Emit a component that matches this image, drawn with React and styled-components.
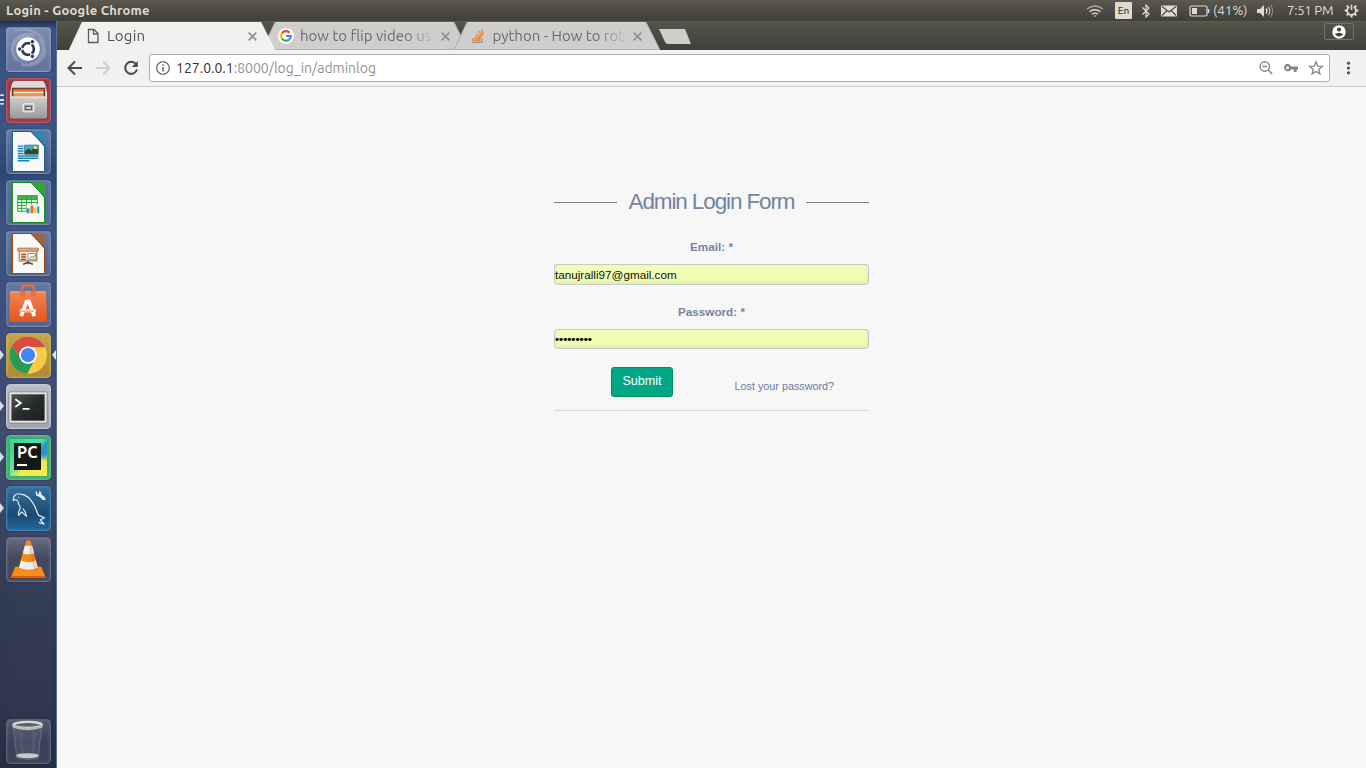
import React from "react";
import styled, { createGlobalStyle } from "styled-components";

const GlobalStyle = createGlobalStyle`
  * { box-sizing: border-box; }
  body { margin: 0; overflow: hidden; }
  svg { display: block; flex: none; }
`;

const uiFont = `Ubuntu, "Noto Sans", "Open Sans", sans-serif`;
const pageFont = `"Liberation Sans", Arial, sans-serif`;

const Desktop = styled.div`
  width: 1366px;
  height: 768px;
  display: flex;
  flex-direction: column;
  font-family: ${uiFont};
  background: #f7f7f7;
`;

const Panel = styled.header`
  height: 21px;
  flex: none;
  display: flex;
  align-items: center;
  justify-content: space-between;
  padding: 0 7px 0 6px;
  background: linear-gradient(#5c5a4f 0, #56544a 3px, #403f3a 20px, #45443c 21px);
  color: #dfdbd2;
`;

const PanelTitle = styled.div`
  font-size: 13px;
  font-weight: 700;
  line-height: 19px;
  padding-bottom: 1px;
  letter-spacing: 0.24px;
  white-space: nowrap;
`;

const Indicators = styled.div`
  display: flex;
  align-items: center;
  height: 21px;
`;

const Indicator = styled.div`
  display: flex;
  align-items: center;
  margin-left: ${(p) => p.$gap || 0}px;
`;

const PanelText = styled.span`
  width: ${(p) => p.$w}px;
  font-size: 13.3px;
  line-height: 20px;
  letter-spacing: ${(p) => p.$ls || 0}px;
  white-space: nowrap;
`;

const LangBadge = styled.div`
  width: 17px;
  height: 17px;
  border-radius: 1px;
  background: #dfdbd2;
  color: #3c3b37;
  font-size: 10px;
  font-weight: 500;
  line-height: 18px;
  text-align: center;
`;

const Main = styled.div`
  display: flex;
  flex: 1;
  min-height: 0;
`;

const Launcher = styled.nav`
  width: 57px;
  flex: none;
  display: flex;
  flex-direction: column;
  padding: 6px 0 4px;
  border-right: 1px solid #56709c;
  background:
    linear-gradient(90deg, rgba(20, 30, 60, 0.08), transparent 30%, transparent 90%, rgba(20, 35, 70, 0.15)),
    linear-gradient(#1e3257 0, #3b5788 9px, #3d5888 110px, #304978 150px, #3f5786 200px, #425179 360px, #414b6a 480px, #333c55 580px, #2f384f 680px, #272e42 747px);
`;

const LauncherItem = styled.div`
  position: relative;
  height: ${(p) => (p.$last ? 45 : 51)}px;
  padding-left: 6px;
  margin-top: ${(p) => (p.$last ? "auto" : 0)};
`;

const Tile = styled.div`
  width: 45px;
  height: 45px;
  border-radius: 4px;
  border: 1px solid ${(p) => p.$edge || "rgba(190,205,235,.25)"};
  background: ${(p) => p.$bg || "linear-gradient(rgba(200,215,240,.28), rgba(160,180,215,.16))"};
  box-shadow: inset 0 0 3px rgba(255, 255, 255, 0.18), 0 0 2px rgba(10, 15, 40, 0.45);
`;

const RunningMark = styled.i`
  position: absolute;
  top: 17px;
  left: 0;
  border: 5px solid transparent;
  border-left: 4px solid #d8dde6;
  border-right: 0;
`;

const FocusMark = styled(RunningMark)`
  left: auto;
  right: 0;
  border-left: 0;
  border-right: 4px solid #e6e6e6;
`;

const WindowPips = styled.i`
  position: absolute;
  left: 0;
  top: 16px;
  width: 4px;
  height: 11px;
  border-radius: 2px;
  background: repeating-linear-gradient(#dfe4ec 0 2px, transparent 2px 4.5px);
`;

const Browser = styled.section`
  flex: 1;
  display: flex;
  flex-direction: column;
  min-width: 0;
`;

const TabStrip = styled.div`
  height: 29px;
  flex: none;
  display: flex;
  align-items: flex-start;
  padding: 1px 12px 0;
  background: linear-gradient(#5e5c51 0, #55544a 2px, #3f3e39 29px);
`;

const TabBox = styled.div`
  position: relative;
  z-index: ${(p) => (p.$active ? 2 : 1)};
  width: 206px;
  height: 28px;
  flex: none;
  display: flex;
  align-items: center;
  margin-right: -13.5px;
  padding: 0 17px 0 ${(p) => (p.$active ? 17 : 16.5)}px;
  color: ${(p) => (p.$active ? "#4f4f53" : "#6b6b6e")};
`;

const TabShape = styled.svg`
  position: absolute;
  inset: 0;
  z-index: -1;
`;

const TabLabel = styled.span`
  width: 135px;
  margin-left: 6px;
  white-space: nowrap;
  font-size: 15px;
  line-height: 26px;
  letter-spacing: ${(p) => p.$ls || 0}px;
  mask-image: linear-gradient(90deg, #000 ${(p) => (p.$fade ? "104px" : "135px")}, transparent 135px);
`;

const NewTab = styled.svg`
  margin: 6px 0 0 10px;
`;

const ProfileButton = styled.div`
  width: 30px;
  height: 17px;
  margin: 1px 0 0 auto;
  display: flex;
  align-items: center;
  justify-content: center;
  border: 1px solid #74736b;
  border-radius: 2px;
`;

const Toolbar = styled.div`
  height: 37px;
  flex: none;
  display: flex;
  align-items: center;
  padding: 0 8px 0 9px;
  background: #f2f1f0;
  border-bottom: 1px solid #cbcac9;
`;

const NavButtons = styled.div`
  display: flex;
  gap: 10px;
`;

const AddressBar = styled.div`
  width: 1181px;
  height: 28px;
  display: flex;
  align-items: center;
  margin-left: 9px;
  padding: 0 5px;
  border: 1px solid #afadab;
  border-radius: 3px;
  background: #fff;
`;

const Url = styled.div`
  flex: 1;
  margin-left: 5px;
  color: #929295;
  font-size: 14px;
  line-height: 24px;
  white-space: nowrap;
`;

const Host = styled.span`
  color: #303036;
`;

const AddressIcons = styled.div`
  display: flex;
  gap: 9px;
`;

const MenuButton = styled.div`
  margin-left: 10px;
`;

const Page = styled.main`
  flex: 1;
  background: #f7f7f7;
  font-family: ${pageFont};
  color: #73849f;
`;

const LoginForm = styled.form`
  width: 315px;
  margin: 106px auto 0;
  display: flex;
  flex-direction: column;
  align-items: center;
`;

const FormTitle = styled.h1`
  align-self: stretch;
  display: flex;
  justify-content: space-between;
  align-items: center;
  margin: 0;
  height: 18px;
  font-size: 22.5px;
  font-weight: 400;
  line-height: 18px;
  letter-spacing: -1.125px;
  white-space: nowrap;
  &::before,
  &::after {
    content: "";
    width: 63px;
    height: 1px;
    background: #7e7e7e;
  }
`;

const Label = styled.div`
  margin-top: ${(p) => p.$top}px;
  height: 16px;
  font-size: 11.7px;
  font-weight: 700;
  line-height: 16px;
`;

const Field = styled.div`
  align-self: stretch;
  height: ${(p) => p.$h}px;
  margin-top: 9px;
  border: 1px solid #c8c8c8;
  border-radius: 3px;
  background: #f2feb6;
  box-shadow: 0 1px 0 #fff, inset 0 -2px 4px rgba(0, 0, 0, 0.08);
  color: #111;
  font-size: 11.7px;
  line-height: ${(p) => p.$line}px;
`;

const Bullets = styled.span`
  color: #000;
  -webkit-text-stroke: 0.2px #000;
`;

const Actions = styled.div`
  align-self: stretch;
  height: 44px;
  margin-top: 18px;
  padding-left: 57px;
  display: flex;
  border-bottom: 1px solid #d8d8d8;
`;

const SubmitButton = styled.button`
  width: 62px;
  height: 30px;
  padding: 0 0 3px;
  border: 1px solid #008d4c;
  border-radius: 3px;
  background: #00a887;
  color: #fff;
  font-family: inherit;
  font-size: 12.6px;
`;

const LostLink = styled.a`
  margin: 12px 0 0 61.5px;
  font-size: 10.8px;
  line-height: 14px;
  color: #6c7c9e;
  white-space: nowrap;
`;

const Dash = () => (
  <svg width="43" height="43" viewBox="0 0 44 44" fill="none">
    <circle cx="21" cy="21.500" r="16.5" fill="#b8c2da" fillOpacity=".16" />
    <path d="M6 27C2 14 13 3 28 7M38 18c5 13-9 24-24 19M10 33C-1 20 10 7 24 8M33 10c9 10 3 25-10 27M8 3c11-4 25 0 31 13" stroke="#d4dbe9" strokeOpacity=".25" strokeWidth="2.400" />
    <circle cx="21.500" cy="21.500" r="12" fill="#fff" />
    <circle cx="21.500" cy="21.500" r="6" stroke="#303c5e" strokeWidth="2.8" />
    <path d="M21.500 21.500H11M21.500 21.500l6-10M21.500 21.500l6 10" stroke="#fff" strokeWidth="1.4" />
    <g fill="#303c5e" stroke="#fff" strokeWidth=".8"><circle cx="12.900" cy="21.500" r="2.200" /><circle cx="26" cy="14" r="2.200" /><circle cx="26" cy="29" r="2.200" /></g>
  </svg>
);

const Files = () => (
  <svg width="43" height="43" viewBox="0 0 44 44">
    <defs><linearGradient id="steel" x2="0" y2="1"><stop stopColor="#cfcfcf" /><stop offset="1" stopColor="#999" /></linearGradient></defs>
    <path d="M8 2h28q2 0 3 3l2 9v5H3v-5l2-9q1-3 3-3z" fill="#dddcdb" />
    <path d="M5 9h34v9.500H5z" fill="#552c28" />
    <path d="M6 10h32v8.500H6z" fill="#dd642d" /><path d="M7 12.500h30v6H7z" fill="#f09152" /><path d="M7 13.800h30" stroke="#fff0df" strokeWidth="1.300" />
    <path d="M3 18h38v20q0 2.500-2.500 2.500h-33Q3 40.500 3 38z" fill="url(#steel)" /><path d="M3 18.500h38" stroke="#eee" />
    <rect x="16.500" y="25.500" width="11" height="8" rx="1.500" fill="#aaa" stroke="#f5f5f5" strokeWidth="1.200" />
    <rect x="19" y="28" width="6" height="3" fill="#ddd" stroke="#555" />
  </svg>
);

const Doc = ({ color, light, children }) => (
  <svg width="43" height="43" viewBox="0 0 44 44">
    <path d="M5.5 1.5H25l13.5 15v26h-33z" fill="#f9f9f8" stroke={color} strokeWidth="1.2" />
    <path d="M24 1.5h14.5V15z" fill={light} /><path d="M24.5 1.5l14 14.5" stroke={color} strokeWidth="1" />
    {children}
  </svg>
);

const Writer = () => (
  <Doc color="#176486" light="#3385ac">
    <path d="M11 16.500h6M11 19h6M11 21.500h6M11 24h6M11 26.500h21M11 29h21M11 31.500h12" stroke="#1683ba" strokeWidth="1.5" />
    <path d="M18 15.5h14v9H18z" fill="#4aa6d5" /><path d="M18 22l4-3 3 2 3-3 4 2v5H18z" fill="#24502f" /><circle cx="29" cy="18" r="1.7" fill="#ffe45a" />
    <path d="M18 15.5h14v9H18z" fill="none" stroke="#136180" strokeWidth=".7" />
  </Doc>
);
const Calc = () => (
  <Doc color="#159020" light="#34a832">
    <path d="M11 15h20v16H11z" fill="#effcec" /><path d="M11 15h20v4H11z" fill="#43b843" />
    <path d="M11 15h20v16H11zM11 19h20M11 22h20M11 25h20M11 28h20M15 15v16M20 15v16M25 15v16" fill="none" stroke="#2aa33b" />
    <path d="M20 24h13v9H20z" fill="#fff" /><path d="M20 28h3v5h-3z" fill="#3192d0" /><path d="M24 25h3v8h-3z" fill="#e86f21" /><path d="M28 27h2v6h-2z" fill="#efb42d" /><path d="M31 26h2v7h-2z" fill="#1c86b9" />
  </Doc>
);
const Impress = () => (
  <Doc color="#984417" light="#a2623e">
    <path d="M12.500 19h18v10.500h-18z" fill="#fae7dc" stroke="#c97551" strokeWidth="1.2" /><path d="M11 16.500h21v3H11z" fill="#eda985" stroke="#b55f3a" strokeWidth=".8" />
    <path d="M14.500 23h5M14.500 25.500h5M14.500 28h5" stroke="#a24d29" strokeWidth="1.500" /><path d="M21.500 22h8v6h-8z" fill="#fff" stroke="#629166" strokeWidth=".8" />
    <path d="M23 27l2-2 2 1 2.500-3" stroke="#289a43" fill="none" /><path d="M21.500 30v3M21.500 31l-5 2M21.500 31l5 2" stroke="#444" strokeWidth="1.400" />
  </Doc>
);
const Software = () => (
  <svg width="43" height="43" viewBox="0 0 44 44">
    <defs><linearGradient id="bag" x2="0" y2="1"><stop stopColor="#f38651" /><stop offset="1" stopColor="#e4531f" /></linearGradient></defs>
    <path d="M3 9h37l1 31H2z" fill="url(#bag)" /><path d="M3 9h37" stroke="#f7ae82" />
    <path d="M15.500 12V6q0-3.500 3.500-3.500h5q3.500 0 3.500 3.500v6" fill="none" stroke="#d96f4c" strokeWidth="2.6" />
    <path d="M13.500 8.500h5V14h-5zM24.500 8.500h5V14h-5z" fill="#db704c" />
    <path d="M14.500 34l5.500-15h2.500L28 34" fill="none" stroke="#fff" strokeWidth="3.800" />
    <path d="M13 28.500h16.500" stroke="#fff" strokeWidth="3" /><path d="M13 28.700h14.500" stroke="#ef7646" strokeWidth="1" />
  </svg>
);
const Chrome = () => (
  <svg width="43" height="43" viewBox="0 0 44 44">
    <circle cx="21.5" cy="21.500" r="19" fill="#f7c843" />
    <g transform="translate(0 -.5)">
      <path d="M5.1 12.5A19 19 0 0 1 38 12.6L39 14H21.5a8 8 0 0 0-7 12z" fill="#d94c40" />
      <path d="M5.1 12.5A19 19 0 0 0 21 41l8-15a8 8 0 0 1-14.5 0z" fill="#2a9b56" />
      <path d="M21.5 14H39A19 19 0 0 1 21 41l7.7-15a8 8 0 0 0-7.2-12z" fill="#f7ca48" />
      <circle cx="21.5" cy="22" r="9" fill="#fff" /><circle cx="21.5" cy="22" r="7.3" fill="#4285f4" />
    </g>
  </svg>
);
const Terminal = () => (
  <svg width="43" height="43" viewBox="0 0 44 44">
    <defs><linearGradient id="screen" x2="1" y2="1"><stop stopColor="#505253" /><stop offset=".5" stopColor="#292c2d" /><stop offset="1" stopColor="#1b1d1e" /></linearGradient></defs>
    <rect x="2" y="7" width="39" height="32" rx="1" fill="#e5e6e5" stroke="#888" /><rect x="4.500" y="9.500" width="34" height="27" fill="url(#screen)" />
    <path d="M8.500 14.500l5.500 4-5.500 4M16 24.500h7" fill="none" stroke="#fff" strokeWidth="1.9" />
  </svg>
);
const PcMark = styled.div`
  width: 27px;
  height: 27px;
  padding: 0 3px;
  background: #161817;
  color: #fff;
  font: 700 16px/19px Ubuntu, "Open Sans", sans-serif;
  &::after { content: ""; display: block; width: 10px; height: 2px; margin-top: 2px; background: #fff; }
`;
const PcArt = styled.div`
  width: 37px;
  height: 37px;
  margin: 3px;
  padding: 4px;
  background: conic-gradient(from 25deg, #49ddb0 0 4%, #2793cf 8% 15%, #e6ea56 22%, #f3ee4b 28% 50%, #70dca2 58%, #39d690 78%, #3eeab0);
`;
const PyCharm = () => <PcArt><PcMark>PC</PcMark></PcArt>;
const Workbench = () => (
  <svg width="43" height="43" viewBox="0 0 44 44" fill="none" stroke="#e3eff5" strokeLinecap="round" strokeLinejoin="round">
    <path d="M6.500 14C6 9 9 6.500 13 7c7 .500 12 6 15 12 2 3 2 7 4.500 10l6 2.500-4.500 2 4 4.500-5-1.500M6.500 14c2-2 4-1 5 1.500 0 3 2.500 4 2 6.500-1 2-2.500 4-1.500 7l3-3.500 5 4.500c-.5-3-1.500-5-3.500-7.500" strokeWidth="1.200" />
    <path d="M12 10.500h.1" strokeWidth="1.300" />
    <path d="M33 8l4.200 3.200" strokeWidth="3.200" /><path d="M30 5.500l.8 3 2.500.5M33.500 5l1 2M36.500 12.500l2.500 0" strokeWidth="1.600" />
  </svg>
);
const Vlc = () => (
  <svg width="43" height="43" viewBox="0 0 44 44">
    <path d="M8.500 29.500h26.500l4.500 11H4z" fill="#f98f1a" /><path d="M4.300 39h35l.5 1.500H4z" fill="#e45d00" />
    <path d="M19.700 3q2-1.500 4.500 0L32 32q-10.500 5-20.500 0z" fill="#f58b20" />
    <path d="M18.200 8h7.500l2.100 7.500q-6 2.500-11.700 0zM14.300 23q8 3.500 15.200 0l2 7.500q-9.700 4-19.200 0z" fill="#f0eee9" /><path d="M23.500 3l8 29-3.500 1.500L23 16z" fill="#a84b18" fillOpacity=".17" />
  </svg>
);
const Trash = () => (
  <svg width="43" height="43" viewBox="0 0 44 44">
    <path d="M6.500 6h29l-3.500 33q-11 3-22 0z" fill="#a8b0c1" fillOpacity=".12" stroke="#97a0b3" strokeOpacity=".4" />
    <path d="M14 12l2 23M28 12l-2 23" stroke="#cbd0db" strokeOpacity=".08" strokeWidth="3" />
    <ellipse cx="21" cy="36.500" rx="11.500" ry="2.600" fill="#c8cbc8" />
    <ellipse cx="21" cy="5" rx="14.500" ry="3" fill="#5c616c" stroke="#d8d9d3" strokeWidth="2.300" /><path d="M6 5v3q15 5 30 0V5q-15 6-30 0z" fill="#b9bbb6" />
  </svg>
);

const apps = [
  { name: "dash", Icon: Dash, bg: "linear-gradient(#7f8cb0,#63729e)" },
  { name: "files", Icon: Files, bg: "#9b3946", edge: "#b85a68", pips: true },
  { name: "writer", Icon: Writer },
  { name: "calc", Icon: Calc },
  { name: "impress", Icon: Impress },
  { name: "software", Icon: Software },
  { name: "chrome", Icon: Chrome, bg: "linear-gradient(#c2a64c,#ad8a32)", edge: "#c4aa55", running: true, focused: true },
  { name: "terminal", Icon: Terminal, bg: "linear-gradient(#b9bdc5,#a1a4ac)", edge: "#c5c8cf", running: true },
  { name: "pycharm", Icon: PyCharm, bg: "linear-gradient(#45a574,#3bb272)", edge: "#5bbf86", running: true },
  { name: "workbench", Icon: Workbench, bg: "linear-gradient(#356f9c,#1a4a73 65%,#22659c)", edge: "#4080b8", running: true },
  { name: "vlc", Icon: Vlc, bg: "linear-gradient(#656980,#45485c 50%,#464859)", edge: "#6b6f82" },
];

const Close = () => <svg width="9" height="9" viewBox="0 0 9 9" stroke="#929292" strokeWidth="1.7"><path d="M.7.7l7.600 7.600M8.300.7L.7 8.300" /></svg>;
const PageIcon = () => <svg width="15" height="16" viewBox="0 0 15 16" fill="none" stroke="#5d5d5d" strokeWidth="1.3"><path d="M2.500 1.500h5.500l4 4v9H2.500zM7.500 1.500v4.500H12" /></svg>;
const GoogleIcon = () => (
  <svg width="16" height="16" viewBox="0 0 16 16" fill="none" strokeWidth="2.200"><circle cx="8" cy="8" r="8" fill="#fff" />
    <path d="M3.900 5.500A4.800 4.800 0 0 1 11.600 4.800" stroke="#ea4335" /><path d="M3.900 5.500a4.800 4.800 0 0 0 0 5" stroke="#fbbc05" />
    <path d="M3.900 10.500a4.800 4.800 0 0 0 7.300 1" stroke="#34a853" /><path d="M8 8h4.800a4.800 4.800 0 0 1-1.600 3.500" stroke="#4285f4" />
  </svg>
);
const StackIcon = () => (
  <svg width="16" height="16" viewBox="0 0 16 16" fill="none"><path d="M2 10v4.500h9V10" stroke="#91949b" strokeWidth="1.200" />
    <path d="M3.500 12.500h6M3.500 10.500l6 .7M4 8.400l5.700 1.700M5.400 5.800l5 3.300M7.600 3l3.700 4.900M10.800 1l1.300 6" stroke="#f48024" strokeWidth="1.300" />
  </svg>
);

const Tab = ({ active, icon, label, fade, ls }) => (
  <TabBox $active={active}>
    <TabShape width="206" height="28" viewBox="0 0 206 28">
      <path d="M0 28L13 0H192L206 28z" fill={active ? "#f2f1f0" : "#cfcecd"} />
      <path d={active ? "M0 28L13 .5H192L206 28" : "M0 28L13 .5H192L206 28M1 27.500H205"} fill="none" stroke={active ? "#f8f8f7" : "#b2b1af"} strokeWidth={active ? 0.5 : 1} />
      {!active && <path d="M14 .5H191" stroke="#d9d8d6" />}
    </TabShape>
    {icon}
    <TabLabel $fade={fade} $ls={ls}>{label}</TabLabel>
    <Indicator $gap={5.5}><Close /></Indicator>
  </TabBox>
);

export default function App() {
  return (
    <Desktop>
      <GlobalStyle />
      <Panel>
        <PanelTitle>Login - Google Chrome</PanelTitle>
        <Indicators>
          <svg width="18" height="14" viewBox="0 0 18 14" fill="none" strokeWidth="1.400"><path d="M1 5q8-6 16 0" stroke="#aaa79f" /><path d="M3.500 7.700q5.500-4 11 0M6 10.200q3-2.200 6 0" stroke="#dfdbd2" /><path d="M7.500 11.500h3L9 13z" fill="#dfdbd2" /></svg>
          <Indicator $gap={11}><LangBadge>En</LangBadge></Indicator>
          <Indicator $gap={9}><svg width="10" height="14" viewBox="0 0 10 14" fill="none" stroke="#dfdbd2" strokeWidth="1.200"><path d="M1.500 3.500l6.500 6.500-3 3V1l3 3-6.500 6.500" /></svg></Indicator>
          <Indicator $gap={10}><svg width="16" height="12" viewBox="0 0 16 12"><rect y=".5" width="16" height="11" rx="1" fill="#dfdbd2" /><path d="M1 1.500l7 5.500 7-5.500M1 10.500l5-5M15 10.500l-5-5" fill="none" stroke="#4b4a43" strokeWidth="1.100" /></svg></Indicator>
          <Indicator $gap={12}><svg width="21" height="12" viewBox="0 0 21 12"><rect x="1" y="1" width="17" height="10" rx="1.500" fill="none" stroke="#dfdbd2" strokeWidth="1.200" /><path d="M3 3h5v6H3z" fill="#dfdbd2" /><path d="M19.500 4v4" stroke="#dfdbd2" strokeWidth="1.500" /></svg></Indicator>
          <Indicator $gap={3}><PanelText $w={35}>(41%)</PanelText></Indicator>
          <Indicator $gap={9}><svg width="17" height="14" viewBox="0 0 17 14" fill="none"><path d="M0 5h3l4-4v12L3 9H0z" fill="#dfdbd2" /><path d="M9 4.500q2 2.500 0 5" stroke="#dfdbd2" strokeWidth="1.300" /><path d="M11.300 2.800q3 4.200 0 8.400" stroke="#c0bdb3" strokeWidth="1.200" /><path d="M13.700 1q4 6 0 12" stroke="#8b8981" strokeWidth="1.200" /></svg></Indicator>
          <Indicator $gap={13}><PanelText $w={46} $ls={-0.3}>7:51 PM</PanelText></Indicator>
          <Indicator $gap={11}><svg width="15" height="15" viewBox="0 0 15 15" fill="none" stroke="#dfdbd2"><path d="M5.300 3.700a4.400 4.400 0 1 0 4.400 0" strokeWidth="1.700" /><path d="M7.500 1.500v5.500" strokeWidth="1.500" /><path d="M.7 7.500h2.300M12 7.500h2.300M2.600 2.600l2 2M12.400 2.600l-2 2M2.600 12.400l1.700-1.700M12.400 12.400l-1.700-1.700M7.500 12v2.500" strokeWidth="1.900" /></svg></Indicator>
        </Indicators>
      </Panel>
      <Main>
        <Launcher>
          {apps.map(({ name, Icon, bg, edge, running, focused, pips }) => (
            <LauncherItem key={name}>
              <Tile $bg={bg} $edge={edge}><Icon /></Tile>
              {running && <RunningMark />}
              {focused && <FocusMark />}
              {pips && <WindowPips />}
            </LauncherItem>
          ))}
          <LauncherItem $last><Tile $bg="linear-gradient(#4f5970,#394258 50%,#3b4357)" $edge="#5a6377"><Trash /></Tile></LauncherItem>
        </Launcher>
        <Browser>
          <TabStrip>
            <Tab active icon={<PageIcon />} label="Login" ls={0.2} />
            <Tab icon={<GoogleIcon />} label="how to flip video us" fade />
            <Tab icon={<StackIcon />} label="python - How to rot" fade />
            <NewTab width="36" height="17" viewBox="0 0 36 17"><path d="M2 1h26l6 15H11q-2 0-3-2z" fill="#cfcecd" /></NewTab>
            <ProfileButton><svg width="14" height="14" viewBox="0 0 14 14"><circle cx="7" cy="7" r="6.700" fill="#fff" /><circle cx="7" cy="4.500" r="2.100" fill="#45443e" /><path d="M2.800 9.300q4.200-3 8.400 0-4.200 4.500-8.400 0z" fill="#45443e" /></svg></ProfileButton>
          </TabStrip>
          <Toolbar>
            <NavButtons>
              <svg width="18" height="18" viewBox="0 0 18 18" fill="none" stroke="#4b4b4b" strokeWidth="2"><path d="M16 9H3M9 2.500L2.500 9 9 15.500" /></svg>
              <svg width="18" height="18" viewBox="0 0 18 18" fill="none" stroke="#cfcecc" strokeWidth="2"><path d="M2 9h13M9 2.500L15.500 9 9 15.500" /></svg>
              <svg width="18" height="18" viewBox="0 0 18 18" fill="none" stroke="#4b4b4b" strokeWidth="2"><path d="M14 5.200A6 6 0 1 0 15 10.500" /><path d="M15.800 2v6h-6z" fill="#4b4b4b" stroke="none" /></svg>
            </NavButtons>
            <AddressBar>
              <svg width="16" height="16" viewBox="0 0 16 16" fill="none" stroke="#6b6b6b"><circle cx="8" cy="8" r="6.300" strokeWidth="1.300" /><path d="M8 7v4.500M8 4.200v1.600" strokeWidth="1.600" /></svg>
              <Url><Host>127.0.0.1</Host>:8000/log_in/adminlog</Url>
              <AddressIcons>
                <svg width="16" height="16" viewBox="0 0 16 16" fill="none" stroke="#858585" strokeWidth="1.400"><circle cx="6.800" cy="6.500" r="4.700" /><path d="M4.500 6.500H9M10.200 10l4 4" /></svg>
                <svg width="16" height="16" viewBox="0 0 16 16" fill="#858585"><path fillRule="evenodd" d="M4.500 3.800a3.800 3.800 0 0 1 3.600 2.700H15v3h-1.400V12h-2.800V9.500H8.100A3.800 3.800 0 1 1 4.500 3.800zm0 2.400a1.500 1.500 0 1 0 0 3 1.500 1.500 0 0 0 0-3z" /></svg>
                <svg width="16" height="16" viewBox="0 0 16 16" fill="none" stroke="#858585" strokeWidth="1.300"><path d="M8 1.800l1.700 4.300 4.600.3-3.500 3 1.100 4.500L8 11.400l-3.900 2.500 1.100-4.500-3.500-3 4.600-.3z" /></svg>
              </AddressIcons>
            </AddressBar>
            <MenuButton><svg width="16" height="18" viewBox="0 0 16 18" fill="#505050"><circle cx="8.500" cy="4.200" r="1.600" /><circle cx="8.500" cy="9" r="1.600" /><circle cx="8.500" cy="13.800" r="1.600" /></svg></MenuButton>
          </Toolbar>
          <Page>
            <LoginForm>
              <FormTitle>Admin Login Form</FormTitle>
              <Label $top={28}>Email: *</Label>
              <Field $h={21} $line={20}>tanujralli97@gmail.com</Field>
              <Label $top={19}>Password: *</Label>
              <Field $h={20} $line={17}><Bullets>•••••••••</Bullets></Field>
              <Actions>
                <SubmitButton type="button">Submit</SubmitButton>
                <LostLink>Lost your password?</LostLink>
              </Actions>
            </LoginForm>
          </Page>
        </Browser>
      </Main>
    </Desktop>
  );
}
